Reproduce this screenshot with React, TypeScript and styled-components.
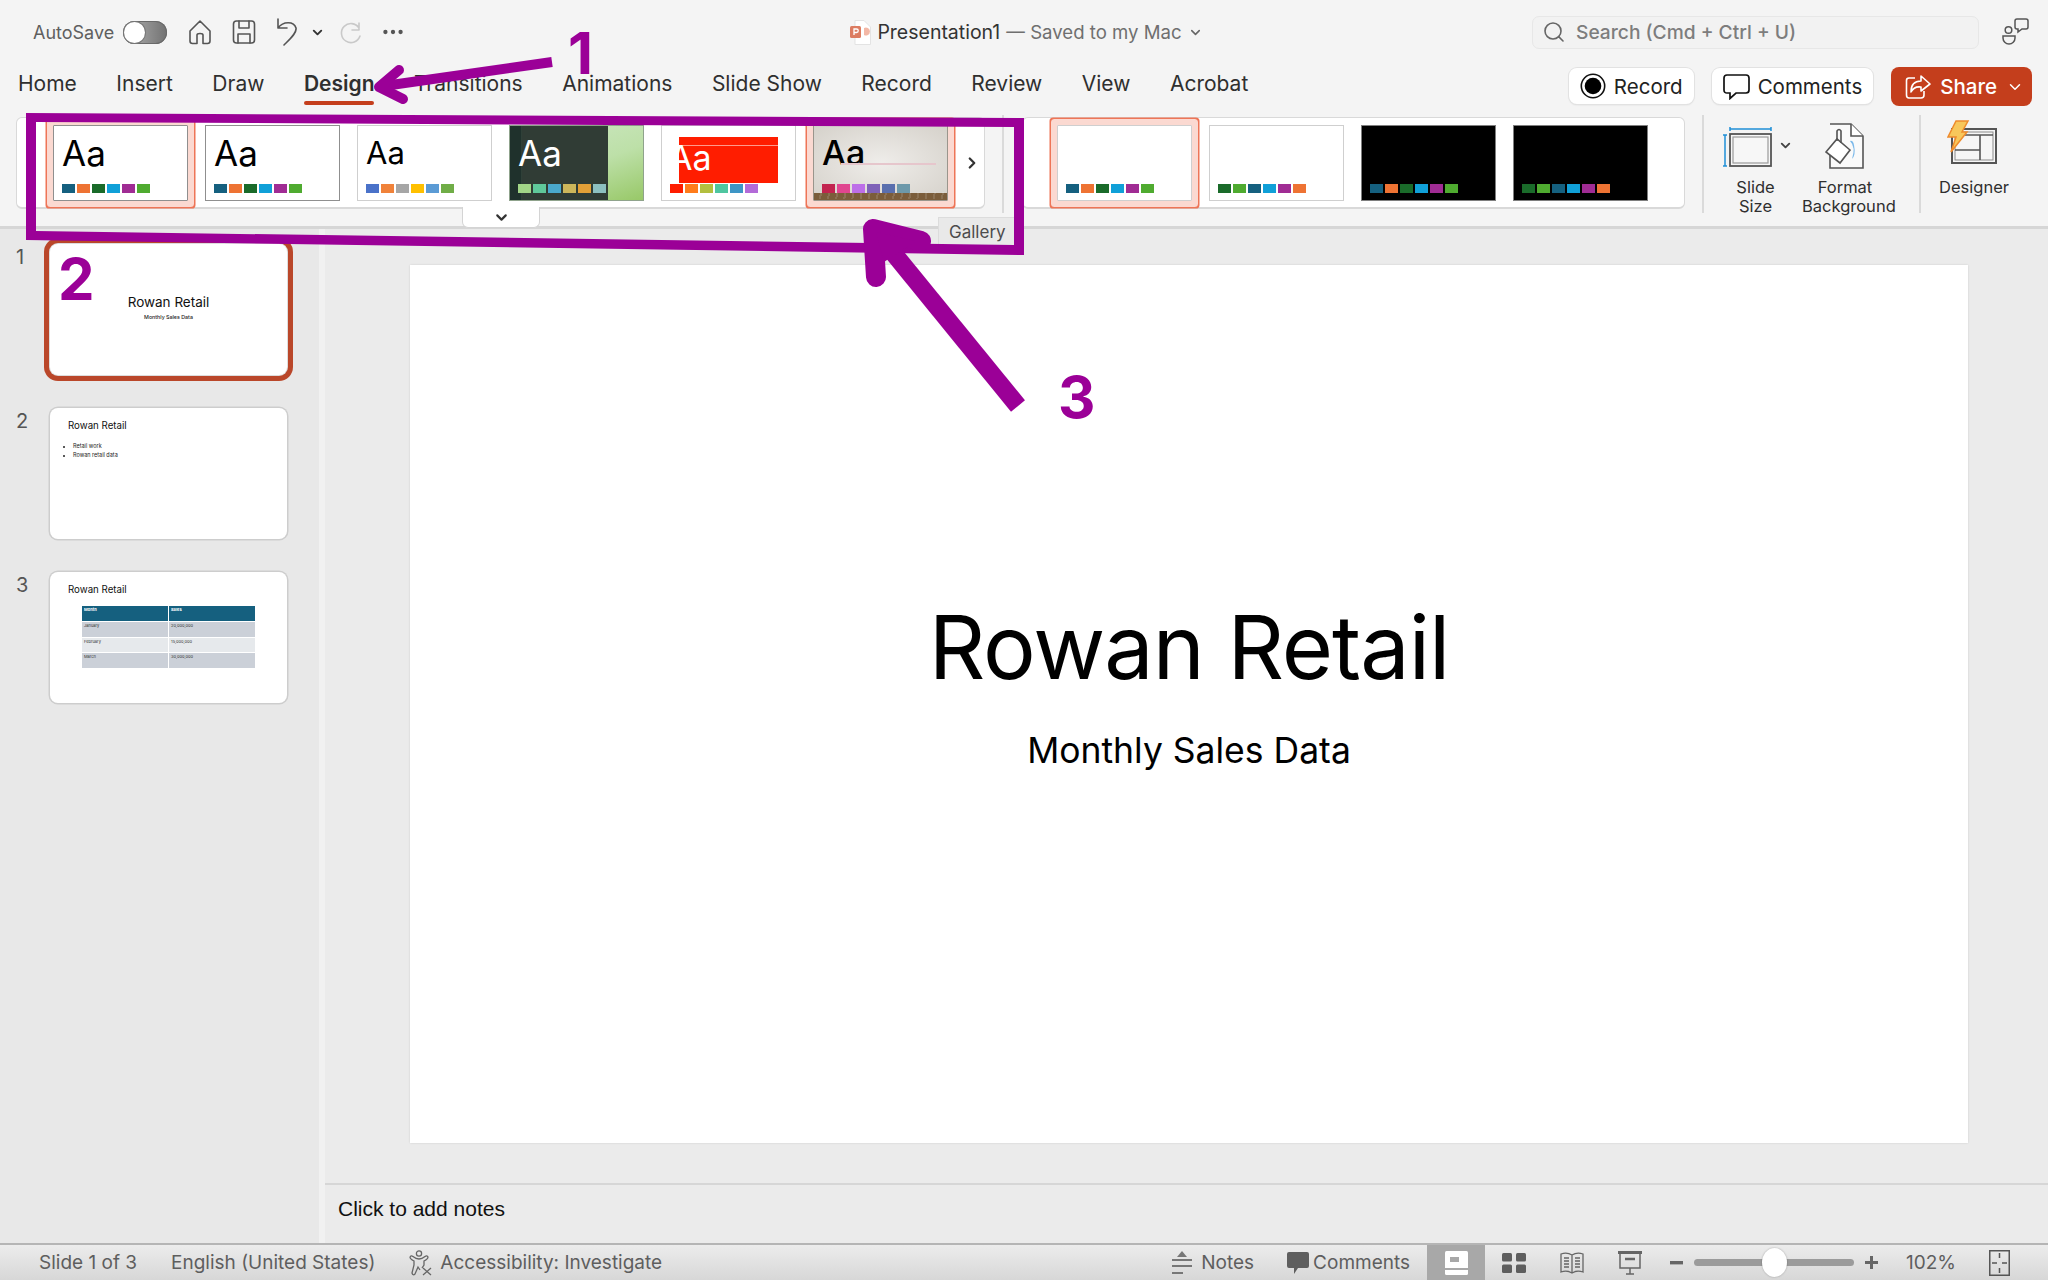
import React from 'react';
import styled, { createGlobalStyle, css } from 'styled-components';
import { ChevronDown, ChevronRight, Ellipsis, Search } from 'lucide-react';

const blue = '#15607f';
const orange = '#ee7333';
const darkGreen = '#1a6b2a';
const sky = '#10a0d8';
const plum = '#a02c94';
const green = '#4fab30';

const office = [blue, orange, darkGreen, sky, plum, green];
const officeAlt = [darkGreen, green, blue, sky, plum, orange];

const TABS = ['Home', 'Insert', 'Draw', 'Design', 'Transitions', 'Animations', 'Slide Show', 'Record', 'Review', 'View', 'Acrobat'];

export default function App() {
  return (
    <Page>
      <GlobalStyle />
      <TitleBar>
        <QuickTools>
          <AutoSave>AutoSave</AutoSave>
          <Toggle />
          <HomeIcon />
          <SaveIcon />
          <UndoIcon />
          <TinyChevron size={15} strokeWidth={3} />
          <RedoIcon />
          <Dots size={26} strokeWidth={2} />
        </QuickTools>
        <DocTitle>
          <PptIcon />
          <span>Presentation1</span>
          <SavedNote>— Saved to my Mac</SavedNote>
          <ChevronDown size={15} strokeWidth={2.5} color="#666" />
        </DocTitle>
        <SearchArea>
          <SearchBox>
            <Search size={24} strokeWidth={1.6} color="#666" />
            <span>Search (Cmd + Ctrl + U)</span>
          </SearchBox>
          <FeedbackIcon />
        </SearchArea>
      </TitleBar>

      <TabRow>
        {TABS.map((tab) => (
          <Tab key={tab} $active={tab === 'Design'}>
            {tab}
          </Tab>
        ))}
        <TabActions>
          <PillButton>
            <RecordIcon />
            Record
          </PillButton>
          <PillButton>
            <CommentIcon />
            Comments
          </PillButton>
          <ShareButton>
            <ShareIcon />
            Share
            <ChevronDown size={18} strokeWidth={2} />
          </ShareButton>
        </TabActions>
      </TabRow>

      <Ribbon>
        <ThemeGallery>
          <ThemeThumb $selected $frame="#8f8f8f">
            <Aa>Aa</Aa>
            <Swatches colors={office} />
          </ThemeThumb>
          <ThemeThumb $frame="#8f8f8f">
            <Aa>Aa</Aa>
            <Swatches colors={office} />
          </ThemeThumb>
          <ThemeThumb>
            <Aa $size={31}>Aa</Aa>
            <Swatches colors={['#4a72c9', '#f0823a', '#a6a6a6', '#ffc000', '#5b9bd5', '#70ad47']} />
          </ThemeThumb>
          <GreenThumb $frame="#8fa38c">
            <Aa $color="#fff">Aa</Aa>
            <Swatches colors={['#a2d587', '#5fc89a', '#4aa9cc', '#ccb65a', '#e2a037', '#8cc0c0']} />
          </GreenThumb>
          <ThemeThumb>
            <RedBlock>
              <RedAa>Aa</RedAa>
            </RedBlock>
            <Swatches colors={['#ff1d00', '#ff7c1c', '#b3bf3f', '#4fc6a0', '#3e96c6', '#b36bd8']} />
          </ThemeThumb>
          <WoodThumb $selected $frame="#9a958c">
            <Aa $size={34} $weight={500}>Aa</Aa>
            <PinkLine />
            <Swatches colors={['#c2244f', '#e0468f', '#bd6ee8', '#7f62b8', '#5a6fae', '#6d99aa']} />
          </WoodThumb>
          <MoreThemes size={18} strokeWidth={3} />
        </ThemeGallery>
        <ExpandTab>
          <ChevronDown size={17} strokeWidth={3} color="#333" />
        </ExpandTab>
        <RibbonDivider $left={17} />
        <VariantGallery>
          <ThemeThumb $selected>
            <Swatches colors={office} />
          </ThemeThumb>
          <ThemeThumb>
            <Swatches colors={officeAlt} />
          </ThemeThumb>
          <BlackThumb>
            <Swatches colors={office} />
          </BlackThumb>
          <BlackThumb>
            <Swatches colors={officeAlt} />
          </BlackThumb>
        </VariantGallery>
        <RibbonDivider $left={17} />
        <RibbonAction $width={99} $left={2}>
          <ActionIcon $top={7} $shift={16}>
            <SlideSizeIcon />
            <SlideSizeChevron size={15} strokeWidth={3} />
          </ActionIcon>
          Slide
          <br />
          Size
        </RibbonAction>
        <RibbonAction $width={86} $left={-3}>
          <ActionIcon $top={3}>
            <FormatIcon />
          </ActionIcon>
          Format
          <br />
          Background
        </RibbonAction>
        <RibbonDivider $left={31} />
        <RibbonAction $width={106}>
          <ActionIcon $shift={5}>
            <DesignerIcon />
          </ActionIcon>
          Designer
        </RibbonAction>
        <GalleryTip>Gallery</GalleryTip>
      </Ribbon>

      <Body>
        <Sidebar>
          <SlideRow>
            <SlideNumber>1</SlideNumber>
            <MiniSlide $selected>
              <MiniCoverTitle>Rowan Retail</MiniCoverTitle>
              <MiniCoverSub>Monthly Sales Data</MiniCoverSub>
            </MiniSlide>
          </SlideRow>
          <SlideRow>
            <SlideNumber>2</SlideNumber>
            <MiniSlide>
              <MiniHeading>Rowan Retail</MiniHeading>
              <MiniBullets>
                <li>Retail work</li>
                <li>Rowan retail data</li>
              </MiniBullets>
            </MiniSlide>
          </SlideRow>
          <SlideRow>
            <SlideNumber>3</SlideNumber>
            <MiniSlide>
              <MiniHeading>Rowan Retail</MiniHeading>
              <MiniTable>
                <MiniHead>Month</MiniHead>
                <MiniHead>Sales</MiniHead>
                <MiniCell $dark>January</MiniCell>
                <MiniCell $dark>20,000,000</MiniCell>
                <MiniCell>February</MiniCell>
                <MiniCell>15,000,000</MiniCell>
                <MiniCell $dark>March</MiniCell>
                <MiniCell $dark>30,000,000</MiniCell>
              </MiniTable>
            </MiniSlide>
          </SlideRow>
        </Sidebar>
        <Workspace>
          <SlideArea>
            <Slide>
              <SlideTitle>Rowan Retail</SlideTitle>
              <SlideSubtitle>Monthly Sales Data</SlideSubtitle>
            </Slide>
          </SlideArea>
          <Notes>Click to add notes</Notes>
        </Workspace>
      </Body>

      <StatusBar>
        <StatusText>Slide 1 of 3</StatusText>
        <StatusText>English (United States)</StatusText>
        <Accessibility>
          <AccessIcon />
          Accessibility: Investigate
        </Accessibility>
        <StatusRight>
          <StatusItem $gap={8} $after={33}>
            <NotesIcon />
            Notes
          </StatusItem>
          <StatusItem $gap={4} $after={17}>
            <BubbleIcon />
            Comments
          </StatusItem>
          <ViewButtons>
            <ViewButton $active>
              <NormalViewIcon />
            </ViewButton>
            <ViewButton>
              <GridIcon />
            </ViewButton>
            <ViewButton>
              <BookIcon />
            </ViewButton>
            <ViewButton>
              <ScreenIcon />
            </ViewButton>
          </ViewButtons>
          <ZoomControl>
            <ZoomSign>
              <rect x="0" y="5" width="13" height="3.4" fill="#666" />
            </ZoomSign>
            <ZoomTrack>
              <ZoomKnob />
            </ZoomTrack>
            <ZoomSign>
              <path d="M0 6.5h13M6.5 0v13" stroke="#666" strokeWidth="3" />
            </ZoomSign>
          </ZoomControl>
          <ZoomValue>102%</ZoomValue>
          <FitIcon />
        </StatusRight>
      </StatusBar>

      <Annotations viewBox="0 0 2048 1280">
        <path
          fillRule="evenodd"
          d="M26 113 L1024 118 V255 L26 240 Z M36 122 V231 L1014 245 V127 Z"
          fill={purple}
        />
        <path d="M552 62 L384 86" stroke={purple} strokeWidth="10" fill="none" />
        <path
          d="M399 70 L379 87 L403 99"
          stroke={purple}
          strokeWidth="10"
          strokeLinecap="round"
          strokeLinejoin="round"
          fill="none"
        />
        <path d="M1018 406 L886 244" stroke={purple} strokeWidth="18" fill="none" />
        <path
          d="M876 277 L873 229 L921 241"
          stroke={purple}
          strokeWidth="20"
          strokeLinecap="round"
          strokeLinejoin="round"
          fill="none"
        />
        <path d="M876 232 L916 241 L884 262 Z" fill={purple} />
      </Annotations>
      <StepMark $left={568} $top={18}>1</StepMark>
      <StepMark $left={58} $top={244}>2</StepMark>
      <StepMark $left={1058} $top={362}>3</StepMark>
    </Page>
  );
}

function Swatches({ colors }: { colors: string[] }) {
  return (
    <SwatchRow>
      {colors.map((color, i) => (
        <Swatch key={i} $color={color} />
      ))}
    </SwatchRow>
  );
}

function HomeIcon() {
  return (
    <QuickIcon width="24" height="26" viewBox="0 0 24 26">
      <path d="M2 12 L12 2 L22 12 V22 Q22 24.5 19.5 24.5 H15 V16 Q15 14.5 12 14.5 Q9 14.5 9 16 V24.5 H4.5 Q2 24.5 2 22 Z" />
    </QuickIcon>
  );
}

function SaveIcon() {
  return (
    <QuickIcon width="24" height="26" viewBox="0 0 24 26">
      <rect x="1.5" y="2" width="21" height="22" rx="3" />
      <path d="M7 2 V9 H17 V2 M6 24 V15 H18 V24" />
    </QuickIcon>
  );
}

function UndoIcon() {
  return (
    <QuickIcon width="22" height="28" viewBox="0 0 22 28">
      <path d="M2 1 V10 H11 M2 10 C7 3 18 3 20 10 C21 15 14 21 8 27" />
    </QuickIcon>
  );
}

function RedoIcon() {
  return (
    <QuickIcon width="24" height="26" viewBox="0 0 24 26" $color="#c9c9c9">
      <path d="M20 4 V11 H13 M20 9 A9.5 9.5 0 1 0 21 17" />
    </QuickIcon>
  );
}

function PptIcon() {
  return (
    <svg width="21" height="25" viewBox="0 0 21 25">
      <path d="M5 .5 H14 L20.5 7 V24.5 H5 Z" fill="#fff" stroke="#e3e3e3" />
      <path d="M14 8 A4 4 0 1 1 14 15 Z" fill="#f3b8a6" />
      <rect y="6" width="11" height="12" rx="1.5" fill="#dc7c61" />
      <path d="M4 15 V9 H6.5 A1.7 1.7 0 0 1 6.5 12.5 H4" stroke="#fff" strokeWidth="1.3" fill="none" />
    </svg>
  );
}

function FeedbackIcon() {
  return (
    <svg width="27" height="28" viewBox="0 0 27 28" fill="none" stroke="#555" strokeWidth="1.5">
      <circle cx="6.5" cy="12" r="3.3" />
      <path d="M1 18 H13 V20 A6 6 0 0 1 1 20 Z" />
      <path d="M13 3 Q13 1 15 1 H24 Q26 1 26 3 V9 Q26 11 24 11 H20 L16 14 V11 H15 Q13 11 13 9 Z" />
    </svg>
  );
}

function RecordIcon() {
  return (
    <svg width="26" height="26" viewBox="0 0 26 26">
      <circle cx="13" cy="13" r="11.7" fill="none" stroke="#111" strokeWidth="1.6" />
      <circle cx="13" cy="13" r="8.3" fill="#000" />
    </svg>
  );
}

function CommentIcon() {
  return (
    <svg width="27" height="27" viewBox="0 0 27 27" fill="none" stroke="#111" strokeWidth="1.7">
      <path d="M4 2 H23 Q26 2 26 5 V17 Q26 20 23 20 H13 L7 25.5 V20 H4 Q1 20 1 17 V5 Q1 2 4 2 Z" />
    </svg>
  );
}

function ShareIcon() {
  return (
    <svg width="26" height="26" viewBox="0 0 26 26" fill="none" stroke="#fff" strokeWidth="1.6">
      <path d="M10 4 H4 Q1.5 4 1.5 6.5 V21 Q1.5 24 4 24 H16 Q19 24 19 21 V17" />
      <path d="M16 2 L25 10 L16 17 V13 Q9 12 6 18 Q6 7 16 7 Z" strokeLinejoin="round" />
    </svg>
  );
}

function SlideSizeIcon() {
  return (
    <svg width="50" height="40" viewBox="0 0 50 40" fill="none">
      <path d="M7 2 H48 M7 0 V4 M48 0 V4 M2 8 V39 M0 8 H4 M0 39 H4" stroke="#1f8fd6" strokeWidth="1.5" />
      <rect x="7" y="7" width="41" height="32" fill="#f7f7f7" stroke="#555" strokeWidth="1.8" />
      <rect x="10" y="10" width="35" height="26" stroke="#9a9a9a" strokeWidth="1.2" />
    </svg>
  );
}

function FormatIcon() {
  return (
    <svg width="40" height="46" viewBox="0 0 40 46" fill="none">
      <path d="M5 1 H26 L38 13 V45 H5 V28" stroke="#555" strokeWidth="1.6" fill="#fafafa" />
      <path d="M26 1 V13 H38" stroke="#555" strokeWidth="1.6" fill="#fff" />
      <path d="M1 29 L12 16 L25 27 L15 40 Z" stroke="#555" strokeWidth="1.6" fill="#fff" />
      <path d="M12 18 V8 Q14 5 16 8 V20" stroke="#555" strokeWidth="1.6" />
      <path d="M25 18 Q31 24 27 36 Q31 32 29 22 Q28 17 25 18 Z" fill="#7cb9ea" />
    </svg>
  );
}

function DesignerIcon() {
  return (
    <svg width="50" height="44" viewBox="0 0 50 44" fill="none">
      <rect x="5" y="9" width="44" height="34" fill="#f6f6f6" stroke="#555" strokeWidth="2" />
      <rect x="8" y="12" width="38" height="28" stroke="#8a8a8a" strokeWidth="1" />
      <path d="M18 15 H46 M33 15 V40 M8 30 H33" stroke="#555" strokeWidth="1.6" />
      <path d="M9 1 H21 L15 12 H20 L4 32 L9 17 H1 Z" fill="#f8c75b" stroke="#ee8b2c" strokeWidth="1.5" />
    </svg>
  );
}

function AccessIcon() {
  return (
    <svg width="24" height="26" viewBox="0 0 24 26" fill="none" stroke="#666" strokeWidth="1.3">
      <circle cx="10" cy="3.5" r="2.6" />
      <path d="M1 7 Q2 5 4 6.5 Q7 9 10 9 Q13 9 16 6.5 Q18 5 19 7 Q19 9 15 11 V15 L13 18 M1 7 Q1 9 5 11 V15 L3 23 Q4 26 6 24 L9 17 L11 20" />
      <path d="M14 18 L22 25 M22 18 L14 25" />
    </svg>
  );
}

function NotesIcon() {
  return (
    <svg width="22" height="24" viewBox="0 0 22 24">
      <path d="M6 6 L11 0 L16 6 Z" fill="#777" />
      <path d="M1 9 H21 M1 15 H21 M1 22 H12" stroke="#777" strokeWidth="2" />
    </svg>
  );
}

function BubbleIcon() {
  return (
    <svg width="22" height="24" viewBox="0 0 22 24">
      <path d="M2 1 H20 Q22 1 22 3 V15 Q22 17 20 17 H11 L7 23 V17 H2 Q0 17 0 15 V3 Q0 1 2 1 Z" fill="#5e5e5e" />
    </svg>
  );
}

function NormalViewIcon() {
  return (
    <svg width="23" height="24" viewBox="0 0 23 24">
      <rect width="23" height="24" rx="1.5" fill="#fff" />
      <rect x="5" y="6" width="9" height="5" fill="#a8a8a8" />
      <rect y="17" width="23" height="2" fill="#a8a8a8" />
    </svg>
  );
}

function GridIcon() {
  return (
    <svg width="24" height="20" viewBox="0 0 24 20" fill="#5e5e5e">
      <rect width="10" height="8.5" rx="1.5" />
      <rect x="14" width="10" height="8.5" rx="1.5" />
      <rect y="11.5" width="10" height="8.5" rx="1.5" />
      <rect x="14" y="11.5" width="10" height="8.5" rx="1.5" />
    </svg>
  );
}

function BookIcon() {
  return (
    <svg width="24" height="22" viewBox="0 0 24 22" fill="none" stroke="#666" strokeWidth="1.3">
      <path d="M1 2 Q7 0 12 3 Q17 0 23 2 V20 Q17 18 12 21 Q7 18 1 20 Z M12 3 V21" />
      <path d="M4 6 H9 M4 9 H9 M4 12 H9 M4 15 H9 M15 6 H20 M15 9 H20 M15 12 H20 M15 15 H20" />
    </svg>
  );
}

function ScreenIcon() {
  return (
    <svg width="24" height="24" viewBox="0 0 24 24" fill="none" stroke="#666" strokeWidth="1.5">
      <path d="M0 1.5 H24" strokeWidth="3" />
      <path d="M2 2 V17 H22 V2 M12 17 V23 M8 23 H16" />
      <path d="M7 8 H17" strokeWidth="2.5" />
    </svg>
  );
}

function FitIcon() {
  return (
    <svg width="21" height="26" viewBox="0 0 21 26" fill="none" stroke="#555" strokeWidth="1.5">
      <rect x=".75" y=".75" width="19.5" height="24.5" />
      <path d="M10.5 3 V8 M10.5 18 V23 M3 13 H8 M13 13 H18" />
    </svg>
  );
}

const purple = '#9b0097';
const uiFont = `Inter, 'Liberation Sans', sans-serif`;

const GlobalStyle = createGlobalStyle`
  html, body {
    margin: 0;
    padding: 0;
    background: #f4f4f4;
  }
`;

const Page = styled.div`
  position: relative;
  display: flex;
  flex-direction: column;
  width: 2048px;
  height: 1280px;
  overflow: hidden;
  background: #f4f4f4;
  color: #2b2b2b;
  font-family: ${uiFont};
`;

const TitleBar = styled.header`
  display: grid;
  grid-template-columns: 1fr auto 1fr;
  align-items: center;
  flex: 0 0 64px;
`;
const QuickTools = styled.div`
  display: flex;
  align-items: center;
  padding-left: 33px;
`;
const AutoSave = styled.span`
  font-size: 18px;
  color: #5f5f5f;
  margin-right: 9px;
`;
const Toggle = styled.span`
  position: relative;
  width: 44px;
  height: 23px;
  border-radius: 12px;
  background: linear-gradient(90deg, #b5b5b5, #727272);
  box-shadow: inset 0 0 0 1px #6a6a6a;
  margin-right: 21px;

  &::after {
    content: '';
    position: absolute;
    left: 1px;
    top: 1px;
    width: 21px;
    height: 21px;
    border-radius: 50%;
    background: #fff;
    box-shadow: 0 0 0 1px #777;
  }
`;
const QuickIcon = styled.svg<{ $color?: string }>`
  flex: none;
  margin-right: 20px;
  fill: none;
  stroke: ${(props) => props.$color ?? '#555'};
  stroke-width: 1.6;
  stroke-linejoin: round;
  stroke-linecap: round;
`;
const TinyChevron = styled(ChevronDown)`
  color: #333;
  margin-left: -8px;
  margin-right: 14px;
`;
const Dots = styled(Ellipsis)`
  color: #555;
  margin-left: -3px;
`;
const DocTitle = styled.div`
  display: flex;
  align-items: center;
  gap: 6px;
  padding-left: 5px;
  font-size: 19.5px;
  color: #333;
`;
const SavedNote = styled.span`
  font-size: 18.6px;
  color: #6f6f6f;
`;
const SearchArea = styled.div`
  display: flex;
  align-items: center;
  justify-content: flex-end;
  gap: 23px;
  padding-right: 19px;
`;
const SearchBox = styled.div`
  display: flex;
  align-items: center;
  gap: 10px;
  box-sizing: border-box;
  width: 447px;
  height: 33px;
  padding-left: 9px;
  border: 1px solid #e7e7e7;
  border-radius: 7px;
  background: #f2f2f2;
  font-size: 19.2px;
  font-weight: 500;
  color: #7d7d7d;
`;

const TabRow = styled.nav`
  display: flex;
  align-items: flex-start;
  flex: 0 0 52px;
  gap: 39.5px;
  padding: 4px 16px 0 18px;
  box-sizing: border-box;
`;
const Tab = styled.span<{ $active?: boolean }>`
  position: relative;
  height: 32px;
  line-height: 32px;
  font-size: 21px;
  color: #2f2f2f;

  ${(props) =>
    props.$active &&
    css`
      font-weight: 600;

      &::after {
        content: '';
        position: absolute;
        left: 0;
        right: 0;
        top: 33px;
        height: 4px;
        border-radius: 2px;
        background: #c43e1c;
      }
    `};
`;
const TabActions = styled.div`
  display: flex;
  align-items: flex-start;
  gap: 18px;
  margin-left: auto;
`;
const PillButton = styled.button`
  display: flex;
  align-items: center;
  justify-content: center;
  gap: 8px;
  height: 36px;
  padding: 0 11px;
  border: 0;
  border-radius: 8px;
  background: #fff;
  box-shadow: 0 0 0 1px #e2e2e2, 0 1px 2px rgba(0, 0, 0, 0.12);
  font-family: inherit;
  font-size: 20.5px;
  color: #222;
`;
const ShareButton = styled(PillButton)`
  gap: 9px;
  height: 39px;
  margin-top: -1px;
  padding: 0 8px 0 14px;
  background: #c43e1c;
  box-shadow: none;
  color: #fff;
  font-weight: 500;
`;

const Ribbon = styled.section`
  position: relative;
  display: flex;
  align-items: flex-start;
  box-sizing: border-box;
  flex: 0 0 113px;
  padding: 1px 0 0 16px;
  border-bottom: 3px solid #d6d6d6;
`;
const galleryBox = css`
  display: flex;
  align-items: center;
  gap: 17px;
  box-sizing: border-box;
  height: 92px;
  background: #fff;
  border: 1px solid #d9d9d9;
  border-bottom-width: 2px;
  border-radius: 6px;
`;
const ThemeGallery = styled.div`
  ${galleryBox};
  width: 969px;
  padding-left: 36px;
`;
const VariantGallery = styled.div`
  ${galleryBox};
  width: 663px;
  margin-left: 18px;
  padding-left: 34px;
`;
const MoreThemes = styled(ChevronRight)`
  color: #333;
  margin-left: -2px;
`;
const ExpandTab = styled.div`
  position: absolute;
  left: 462px;
  top: 91px;
  display: flex;
  align-items: center;
  justify-content: center;
  box-sizing: border-box;
  width: 78px;
  height: 21px;
  background: #fff;
  border: 1px solid #d4d4d4;
  border-top: 0;
  border-radius: 0 0 6px 6px;
`;
const RibbonDivider = styled.span<{ $left: number }>`
  flex: none;
  align-self: flex-start;
  width: 2px;
  height: 98px;
  margin-top: -2px;
  margin-left: ${(props) => props.$left}px;
  background: #dadada;
`;
const RibbonAction = styled.div<{ $width: number; $left?: number }>`
  flex: none;
  width: ${(props) => props.$width}px;
  margin-left: ${(props) => props.$left ?? 0}px;
  text-align: center;
  font-size: 16.5px;
  line-height: 19px;
  color: #2f2f2f;
`;
const ActionIcon = styled.div<{ $top?: number; $shift?: number }>`
  position: relative;
  display: flex;
  align-items: flex-start;
  justify-content: center;
  box-sizing: border-box;
  height: 58px;
  margin-top: 3px;
  padding-top: ${(props) => props.$top ?? 0}px;
  padding-right: ${(props) => props.$shift ?? 0}px;
`;
const SlideSizeChevron = styled(ChevronDown)`
  position: absolute;
  left: 72px;
  top: 18px;
  color: #444;
`;
const GalleryTip = styled.div`
  position: absolute;
  left: 938px;
  top: 101px;
  box-sizing: border-box;
  width: 86px;
  height: 30px;
  padding: 4px 0 0 10px;
  border: 1px solid #dcdcdc;
  background: #e9e9e9;
  font-size: 17px;
  color: #4c4c4c;
`;

const ThemeThumb = styled.div<{ $selected?: boolean; $frame?: string }>`
  position: relative;
  flex: none;
  box-sizing: border-box;
  width: 135px;
  height: 76px;
  background: #fff;
  border: 1.5px solid ${(props) => props.$frame ?? '#cfcfcf'};

  ${(props) =>
    props.$selected &&
    css`
      box-shadow: 0 0 0 6px #fbd9d1, 0 0 0 7.5px #ee7557;
      border-radius: 1px;
    `};
`;
const GreenThumb = styled(ThemeThumb)`
  background: linear-gradient(90deg, #1f312c 0 8%, #2f4038 8% 9%, #303c35 9% 74%, transparent 74%),
    linear-gradient(160deg, #cfe8c6, #bde0a8 55%, #98c868);
`;
const WoodThumb = styled(ThemeThumb)`
  background: repeating-linear-gradient(100deg, transparent 0 6px, rgba(255, 255, 255, 0.12) 6px 8px) 0 100% / 100% 10% no-repeat,
    linear-gradient(180deg, transparent 0 90%, #7b5d3b 90%),
    radial-gradient(ellipse at center, #efedea, #d5d1ca);
`;
const BlackThumb = styled(ThemeThumb)`
  background: #000;
  border-color: #7f7f7f;
`;
const Aa = styled.span<{ $color?: string; $size?: number; $weight?: number }>`
  position: absolute;
  left: 8px;
  top: 4px;
  font-size: ${(props) => props.$size ?? 35}px;
  line-height: 46px;
  font-weight: ${(props) => props.$weight ?? 400};
  color: ${(props) => props.$color ?? '#000'};
`;
const RedBlock = styled.div`
  position: absolute;
  left: 17px;
  top: 11px;
  width: 99px;
  height: 46px;
  overflow: hidden;
  background: linear-gradient(180deg, #ff1d00 0 17%, #ff9a8c 17% 20%, #ff1d00 20%);
`;
const RedAa = styled.span`
  position: absolute;
  left: -10px;
  top: -2px;
  font-size: 34px;
  line-height: 46px;
  color: #fff;
`;
const PinkLine = styled.span`
  position: absolute;
  left: 27px;
  right: 11px;
  top: 37px;
  height: 2px;
  background: #e6c6cc;
`;
const SwatchRow = styled.div`
  position: absolute;
  left: 8px;
  top: 58px;
  display: flex;
  gap: 2px;
`;
const Swatch = styled.span<{ $color: string }>`
  width: 13px;
  height: 9px;
  background: ${(props) => props.$color};
`;

const Body = styled.main`
  display: flex;
  flex: 1;
  min-height: 0;
`;
const Sidebar = styled.aside`
  display: flex;
  flex-direction: column;
  gap: 33px;
  flex: 0 0 325px;
  box-sizing: border-box;
  padding-top: 15px;
  background: #e8e8e8;
  border-right: 6px solid #f1f1f1;
  box-shadow: inset -2px 0 0 #e8e8e8, 2px 0 0 #d2d2d2;
`;
const SlideRow = styled.div`
  display: flex;
  align-items: flex-start;
  padding-left: 16px;
`;
const SlideNumber = styled.span`
  flex: 0 0 34px;
  margin-top: 1px;
  font-size: 20px;
  color: #555;
`;
const MiniSlide = styled.div<{ $selected?: boolean }>`
  display: flex;
  flex-direction: column;
  box-sizing: border-box;
  width: 237px;
  height: 131px;
  background: #fff;
  border-radius: 8px;
  box-shadow: 0 0 0 1.5px #cdcdcd;
  overflow: hidden;

  ${(props) =>
    props.$selected &&
    css`
      align-items: center;
      overflow: visible;
      padding-top: 48px;
      box-shadow: 0 0 0 1px #ddd, 0 0 0 6px #ba472a;
    `};
`;
const MiniCoverTitle = styled.span`
  font-size: 13.5px;
  line-height: 20px;
  color: #111;
`;
const MiniCoverSub = styled.span`
  margin-top: 1px;
  font-size: 5.3px;
  line-height: 8px;
  font-weight: 500;
  color: #222;
`;
const MiniHeading = styled.span`
  padding: 10px 0 0 18px;
  font-size: 9.7px;
  line-height: 16px;
  color: #111;
`;
const MiniBullets = styled.ul`
  margin: 7.5px 0 0;
  padding: 0 0 0 23px;
  font-size: 5.5px;
  line-height: 9.5px;
  color: #222;
`;
const MiniTable = styled.div`
  display: grid;
  grid-template-columns: 1fr 1fr;
  grid-auto-rows: 14.8px;
  gap: 1px 1px;
  width: 173px;
  margin: 8px 0 0 32px;
`;
const MiniHead = styled.span`
  padding: 1px 2px;
  background: ${blue};
  font-size: 4px;
  font-weight: 700;
  line-height: 6px;
  color: #fff;
`;
const MiniCell = styled.span<{ $dark?: boolean }>`
  padding: 1px 2px;
  background: ${(props) => (props.$dark ? '#cbd0d8' : '#e6e9ec')};
  font-size: 4px;
  line-height: 6px;
  color: #333;
`;

const Workspace = styled.div`
  display: flex;
  flex-direction: column;
  flex: 1;
  min-width: 0;
  background: #ebebeb;
`;
const SlideArea = styled.div`
  flex: 1;
  padding: 36px 0 0 85px;
`;
const Slide = styled.article`
  display: flex;
  flex-direction: column;
  align-items: center;
  box-sizing: border-box;
  width: 1558px;
  height: 878px;
  padding-top: 328px;
  background: #fff;
  box-shadow: 0 0 2px rgba(0, 0, 0, 0.12);
  color: #000;
`;
const SlideTitle = styled.h1`
  margin: 0;
  font-size: 88px;
  font-weight: 400;
  letter-spacing: -1px;
  line-height: 108px;
`;
const SlideSubtitle = styled.p`
  margin: 28px 0 0;
  font-size: 35.5px;
  line-height: 44px;
`;
const Notes = styled.div`
  flex: 0 0 60px;
  box-sizing: border-box;
  padding: 10px 0 0 13px;
  border-top: 2px solid #d6d6d6;
  font-family: 'Liberation Sans', Arial, sans-serif;
  font-size: 21px;
  line-height: 28px;
  color: #111;
`;

const StatusBar = styled.footer`
  display: flex;
  align-items: center;
  flex: 0 0 37px;
  box-sizing: border-box;
  gap: 34px;
  padding-left: 39px;
  border-top: 2px solid #b5b5b5;
  background: linear-gradient(180deg, #ececec, #d7d7d7);
  font-size: 19px;
  color: #5e5e5e;
`;
const StatusText = styled.span``;
const Accessibility = styled.span`
  display: flex;
  align-items: center;
  gap: 7px;
`;
const StatusRight = styled.div`
  display: flex;
  align-items: center;
  align-self: stretch;
  margin-left: auto;
  padding-right: 38px;
`;
const StatusItem = styled.span<{ $gap: number; $after: number }>`
  display: flex;
  align-items: center;
  gap: ${(props) => props.$gap}px;
  margin-right: ${(props) => props.$after}px;
`;
const ViewButtons = styled.div`
  display: flex;
  align-self: stretch;
`;
const ViewButton = styled.span<{ $active?: boolean }>`
  display: flex;
  align-items: center;
  justify-content: center;
  width: 58px;
  background: ${(props) => (props.$active ? '#a8a8a8' : 'transparent')};
`;
const ZoomControl = styled.div`
  display: flex;
  align-items: center;
  gap: 11px;
  margin-left: 11px;
`;
const ZoomSign = styled.svg.attrs({ width: 13, height: 13, viewBox: '0 0 13 13' })``;
const ZoomTrack = styled.div`
  position: relative;
  width: 160px;
  height: 7px;
  border-radius: 4px;
  background: #9b9b9b;
`;
const ZoomKnob = styled.span`
  position: absolute;
  left: 68px;
  top: -11px;
  width: 25px;
  height: 29px;
  border-radius: 50%;
  background: #fff;
  box-shadow: 0 0 2px rgba(0, 0, 0, 0.3);
`;
const ZoomValue = styled.span`
  margin: 0 33px 0 28px;
`;
const Annotations = styled.svg`
  position: absolute;
  left: 0;
  top: 0;
  width: 2048px;
  height: 1280px;
  pointer-events: none;
`;
const StepMark = styled.span<{ $left: number; $top: number }>`
  position: absolute;
  left: ${(props) => props.$left}px;
  top: ${(props) => props.$top}px;
  font-size: 58px;
  line-height: 70px;
  font-weight: 700;
  color: ${purple};
`;
